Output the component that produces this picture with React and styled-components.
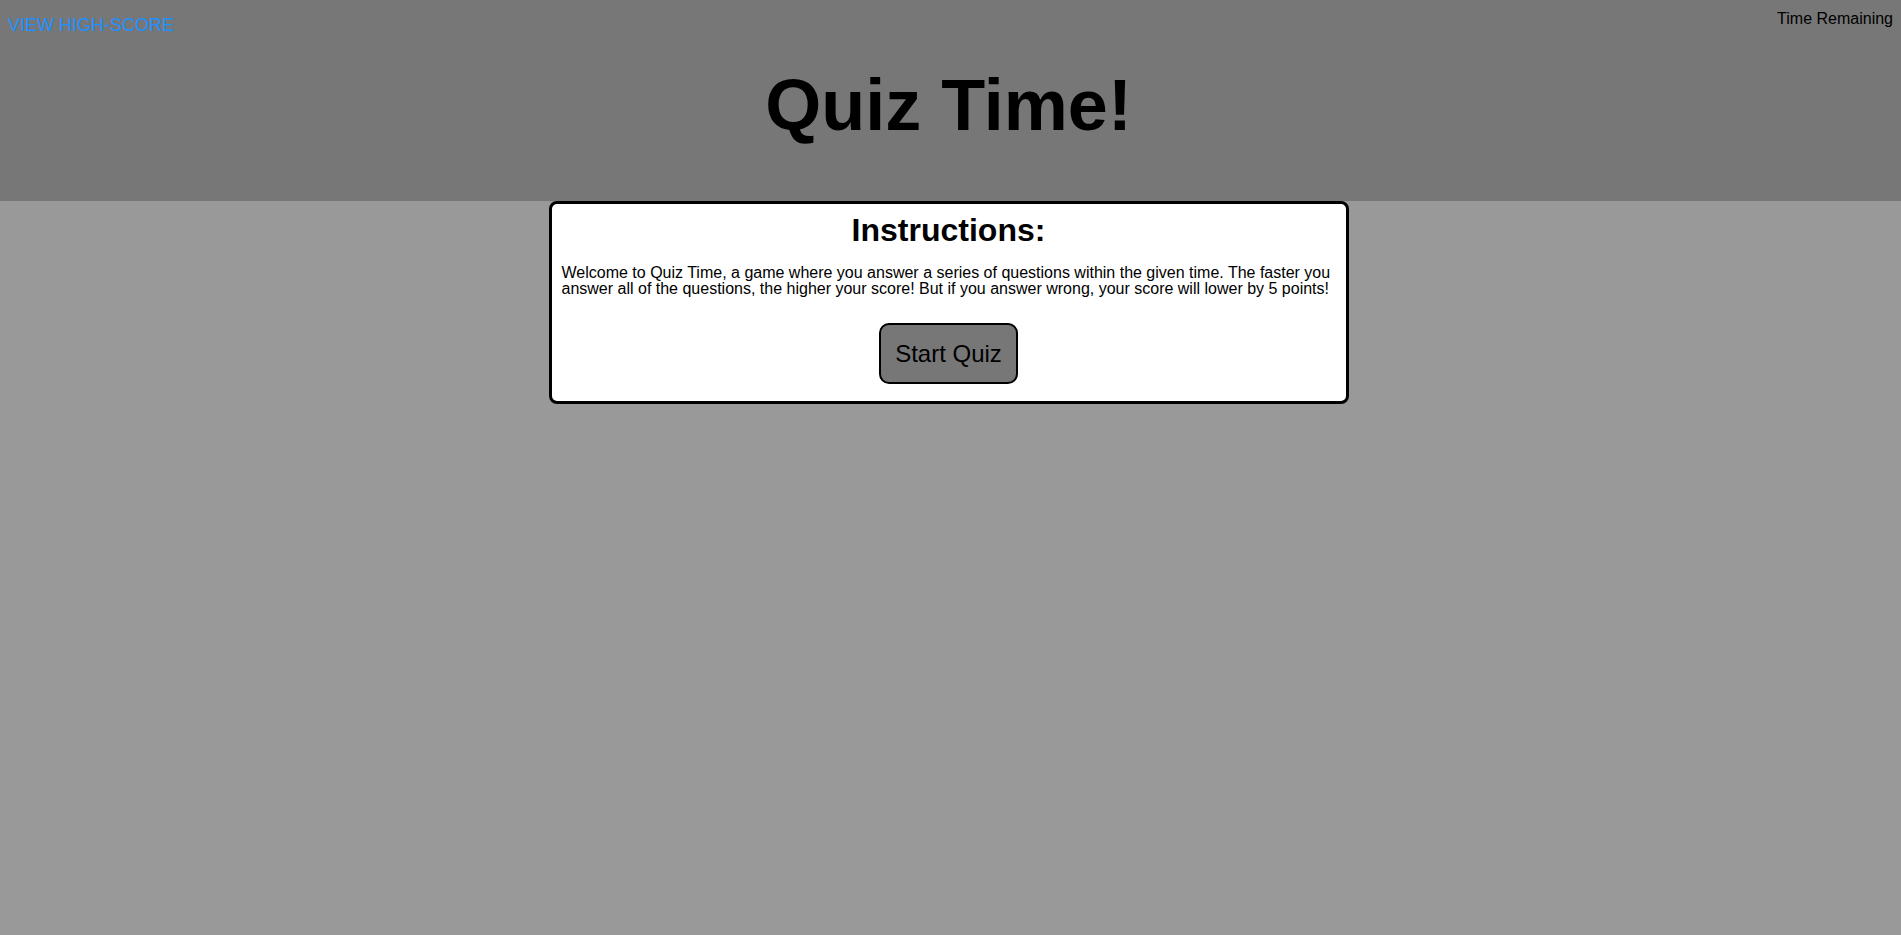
import React from "react";
import styled, { createGlobalStyle } from "styled-components";

const Global = createGlobalStyle`
  html, body { margin: 0; padding: 0; }
  body {
    background: #999999;
    font-family: "Liberation Sans", Arial, sans-serif;
    min-height: 100vh;
  }
`;

const Header = styled.header`
  background: #777777;
  height: 201px;
  padding: 8px 8px 0 8px;
  box-sizing: border-box;
  display: flex;
  flex-direction: column;
`;

const TopBar = styled.div`
  display: flex;
  justify-content: space-between;
  align-items: flex-start;
  height: 46px;
`;

const HighScoreLink = styled.a`
  color: #1e90ff;
  font-size: 18px;
  text-decoration: none;
  margin-top: 7px;
  cursor: pointer;
`;

const Timer = styled.div`
  color: #000;
  font-size: 16px;
  margin-top: 2px;
`;

const Title = styled.h1`
  margin: 10px 0 0 0;
  text-align: center;
  font-size: 72px;
  font-weight: 700;
  color: #000;
  padding-right: 4px;
`;

const Main = styled.main`
  display: flex;
  justify-content: center;
  padding-right: 4px;
`;

const Card = styled.section`
  width: 800px;
  box-sizing: border-box;
  background: #fff;
  border: 3px solid #000;
  border-radius: 8px;
  padding: 8px 10px 17px 10px;
  display: flex;
  flex-direction: column;
  align-items: center;
`;

const CardTitle = styled.h2`
  margin: 0;
  font-size: 32px;
  font-weight: 700;
  text-align: center;
`;

const Text = styled.p`
  margin: 16px 0 0 0;
  font-size: 16px;
  line-height: 16px;
  align-self: stretch;
`;

const StartButton = styled.button`
  margin-top: 26px;
  width: 139px;
  height: 61px;
  box-sizing: border-box;
  background: #777777;
  border: 2px solid #000;
  border-radius: 10px;
  font-family: "Liberation Sans", Arial, sans-serif;
  font-size: 24px;
  color: #000;
  padding: 0;
  cursor: pointer;
`;

export default function App() {
  return (
    <>
      <Global />
      <Header>
        <TopBar>
          <HighScoreLink>VIEW HIGH-SCORE</HighScoreLink>
          <Timer>Time Remaining</Timer>
        </TopBar>
        <Title>Quiz Time!</Title>
      </Header>
      <Main>
        <Card>
          <CardTitle>Instructions:</CardTitle>
          <Text>
            Welcome to Quiz Time, a game where you answer a series of questions within the given
            time. The faster you answer all of the questions, the higher your score! But if you
            answer wrong, your score will lower by 5 points!
          </Text>
          <StartButton>Start Quiz</StartButton>
        </Card>
      </Main>
    </>
  );
}
